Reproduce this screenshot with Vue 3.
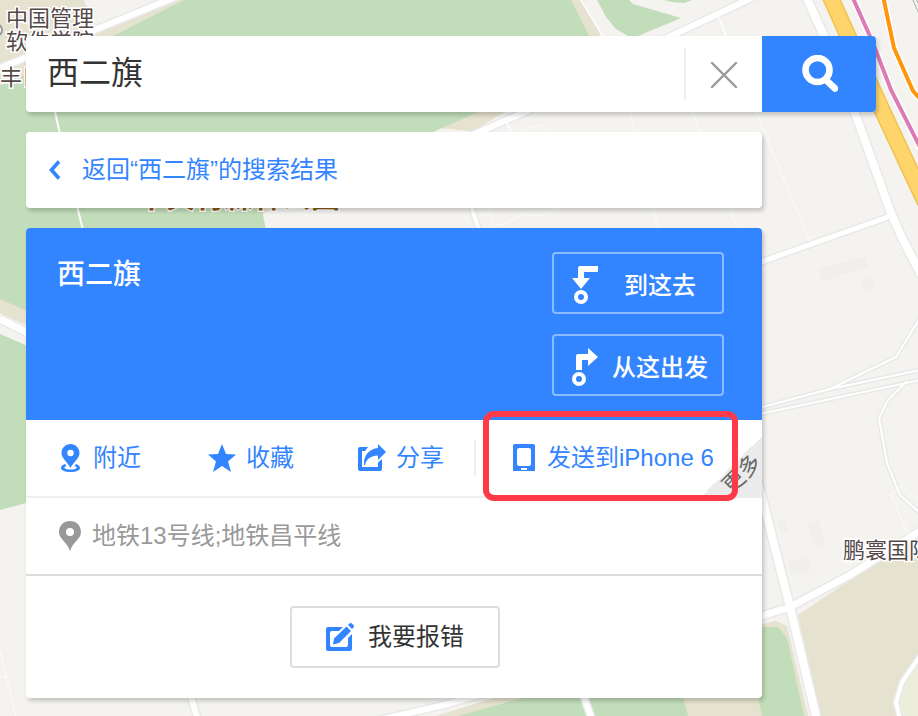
<template>
  <main class="page">
    <!-- Mapa de fondo -->
    <svg class="map" viewBox="0 0 918 716" preserveAspectRatio="xMinYMin slice" aria-hidden="true">
      <rect width="918" height="716" fill="#f4f3ef" />

      <!-- Zonas verdes y terrenos -->
      <g fill="#e5e2cf">
        <path d="M0 0H84L95 32L0 75Z" />
        <path d="M95 30L165 0H190L113 40L0 90V64Z" />
        <path d="M566 0H583L603 40H585Z" />
        <path d="M455 110H508L468 134L255 240V205Z" />
        <path d="M0 296L30 310V327L0 313Z" />
        <path d="M798 615L880 560L918 538V716H820Z" />
        <path d="M755 626L776 621L787 626L808 716H680V690H760Z" />
        <path d="M500 696H540L480 716H436Z" />
      </g>
      <path d="M262 214L440 128L478 132V240H268Z" fill="#f4f3ef" />
      <g fill="#c2ddb9">
        <path d="M184 0H571L589 36L560 90L478 112L433 132L262 210L268 240L120 330L30 312L0 299V86L113 36Z" />
        <path d="M0 334L30 347V502L0 510Z" />
        <path d="M597 0H629L633 4L681 18L638 36H628L616 29L606 17Z" />
        <path d="M664 0H692L685 3L672 2Z" />
        <path d="M762 627H778L787 638L804 716H762L755 680Z" />
        <path d="M526 697H683L688 716H458Z" />
      </g>
      <path d="M918 656L902 680L896 702L900 716H918Z" fill="#ededdc" />
      <g fill="#f0efec">
        <path d="M818 268L866 256L868 266L822 282Z" />
        <path d="M860 282L872 277L875 287L864 291Z" />
        <path d="M778 520L785 518L788 530L780 533Z" />
        <path d="M806 524L818 519L826 545L815 545Z" />
        <path d="M788 562L808 555L811 570L792 576Z" />
      </g>

      <!-- Calles: borde gris y relleno blanco -->
      <g v-for="calle in calles" :key="calle.d" fill="none" stroke-linejoin="round">
        <path :d="calle.d" stroke="#e9e9e9" :stroke-width="calle.w + 3" />
      </g>
      <g v-for="calle in calles" :key="calle.d" fill="none" stroke-linejoin="round">
        <path :d="calle.d" stroke="#fff" :stroke-width="calle.w" />
      </g>
      <g fill="none" stroke="#fcfcfc" stroke-width="2">
        <path d="M55 112L60 134M77 206L83 230M718 16L727 38M505 118L511 132" />
        <path d="M756 112L784 180L811 243M630 112L636 134M692 112L701 134M653 206L658 230M729 206L738 230" stroke-width="1" />
        <path d="M522 133L530 128L541 125L550 129L551 133M478 218L489 212L495 225L503 225L524 214L539 216L560 208" stroke-width="1" />
        <path d="M908 534L891 495L902 485L918 500M0 652L16 716M0 677H6" stroke-width="1" />
        <path d="M581 0L604 38" />
      </g>

      <!-- Vías rápidas y líneas de metro -->
      <g fill="none">
        <path d="M830 -4L848 36L883 112L925 202" stroke="#f0c24f" stroke-width="17" />
        <path d="M830 -4L848 36L883 112L925 202" stroke="#ffd56b" stroke-width="14" />
        <path d="M852 -4L873 43L891 90L921 149" stroke="#fff" stroke-width="7" />
        <path d="M852 -4L873 43L891 90L921 149" stroke="#dd7bb5" stroke-width="4" />
        <path d="M883 -4L894 48L913 91L922 101" stroke="#fff" stroke-width="7" />
        <path d="M883 -4L894 48L913 91L922 101" stroke="#ff950a" stroke-width="4" />
        <path d="M912 -2L920 16M916 -2L921 10" stroke="#aaa" stroke-width="1" />
      </g>

      <circle cx="-4" cy="30" r="6" fill="#fff" stroke="#999" stroke-width="2" />
      <g class="map-label">
        <text x="6" y="26">中国管理</text>
        <text x="6" y="49">软件学院</text>
        <text x="0" y="85">丰巨</text>
        <text x="843" y="558">鹏寰国际</text>
      </g>
      <text class="map-park" x="137" y="208">中关村森林公园</text>
    </svg>

    <div class="panel">
      <form class="search" @submit.prevent="buscar">
        <input v-model="consulta" class="search-input" type="text" aria-label="搜索" />
        <button class="clear" type="button" aria-label="清空" @click="consulta = ''">
          <svg width="28" height="28" viewBox="0 0 28 28">
            <path d="M2 3L26 27M26 3L2 27" fill="none" stroke="#999" stroke-width="2.4" stroke-linecap="round" />
          </svg>
        </button>
        <button class="submit" type="submit" aria-label="搜索">
          <svg width="38" height="38" viewBox="0 0 38 38" fill="none" stroke="#fff">
            <circle cx="17.500" cy="15" r="12" stroke-width="6.600" />
            <path d="M26 25L35 33.500" stroke-width="6.600" stroke-linecap="round" />
          </svg>
        </button>
      </form>

      <a class="card back" href="#">
        <svg width="12" height="20" viewBox="0 0 12 20">
          <path d="M10 1.500L2.500 10L10 18.500" fill="none" stroke="#3385ff" stroke-width="3.600" />
        </svg>
        <span>返回“{{ lugar }}”的搜索结果</span>
      </a>

      <section class="card">
        <header class="place">
          <h1>{{ lugar }}</h1>
          <div class="routes">
            <button type="button" class="route">
              <svg width="26" height="38" viewBox="0 0 26 38">
                <path d="M6 12V2Q6 0 8 0H26V6H12V12H18L9 23L0 12Z" fill="#fff" />
                <circle cx="9" cy="31" r="5" fill="none" stroke="#fff" stroke-width="4" />
              </svg>
              <span>到这去</span>
            </button>
            <button type="button" class="route">
              <svg width="26" height="38" viewBox="0 0 26 38">
                <path d="M4 22V8Q4 6 6 6H16V0L26 9L16 18V12H10V22Z" fill="#fff" />
                <circle cx="7" cy="31" r="5" fill="none" stroke="#fff" stroke-width="4" />
              </svg>
              <span>从这出发</span>
            </button>
          </div>
        </header>

        <nav class="actions">
          <a class="action" href="#">
            <svg width="22" height="28" viewBox="0 0 22 28" fill="#3385ff">
              <path fill-rule="evenodd" d="M9.500 0C4.500 0 .5 4 .5 9C.5 14.500 6.500 18 9.500 24C12.500 18 18.500 14.500 18.500 9C18.500 4 14.500 0 9.500 0ZM9.500 5.800A3.200 3.200 0 1 1 9.500 12.200A3.200 3.200 0 1 1 9.500 5.800Z" />
              <path d="M4 20C1.500 20.700 0 22 0 24C0 26.500 4.500 28 9.500 28C14.500 28 19 26.500 19 24C19 22 17.500 20.700 15 20L13.500 22C15.500 22.500 16 23.200 15.500 24C14.500 25 12 25.500 9.500 25.500C7 25.500 4.500 25 3.500 24C3 23.200 3.500 22.500 5.500 22Z" />
            </svg>
            <span>附近</span>
          </a>
          <a class="action" href="#">
            <svg width="28" height="28" viewBox="0 0 28 28">
              <path d="M14 0L18 10L28 10.500L20 17.500L23 28L14 22L5 28L8 17.500L0 10.500L10 10Z" fill="#3385ff" />
            </svg>
            <span>收藏</span>
          </a>
          <a class="action" href="#">
            <svg width="28" height="28" viewBox="0 0 28 28" fill="#3385ff">
              <path d="M10 3H2Q0 3 0 5V25Q0 27 2 27H22Q24 27 24 25V15L20 18.500V23H4V7H7Z" />
              <path d="M20 0L28 8L20 16V11.500C13 11.500 8.500 15 7 21H6C5.500 11 11 5 20 4Z" />
            </svg>
            <span>分享</span>
          </a>
          <div class="send">
            <a class="send-link" href="#">
              <svg width="22" height="28" viewBox="0 0 22 28">
                <path fill-rule="evenodd" d="M2 0H20Q22 0 22 2V27H0V2Q0 0 2 0ZM6 4Q4 4 4 6V20Q4 22 6 22H16Q18 22 18 20V6Q18 4 16 4ZM8 24V26H14V24Z" fill="#3385ff" />
              </svg>
              <span>发送到iPhone 6</span>
            </a>
            <a class="more" href="#"><span>更多</span></a>
            <div class="highlight"></div>
          </div>
        </nav>

        <p class="address">
          <svg width="22" height="30" viewBox="0 0 22 30">
            <path fill-rule="evenodd" d="M11 0C4.500 0 0 4.800 0 11C0 18 7.500 20 11 30C14.500 20 22 18 22 11C22 4.800 17.500 0 11 0ZM11 7A4 4 0 1 1 11 15A4 4 0 1 1 11 7Z" fill="#999" />
          </svg>
          <span>地铁13号线;地铁昌平线</span>
        </p>

        <footer class="report">
          <button type="button" class="report-button">
            <svg width="28" height="28" viewBox="0 0 28 28" fill="#3385ff">
              <path d="M17 4H2Q0 4 0 6V26Q0 28 2 28H24Q26 28 26 26V11L22 15V22Q22 24 20 24H6Q4 24 4 22V10Q4 8 6 8H13Z" />
              <path d="M20.500 3.500L25 8L13 20L7 21.500L8 15.500ZM22 2L23.500 .5Q25 -.5 26.500 1L27.500 2Q28.500 3.500 27.500 4.500L26 6Z" />
            </svg>
            <span>我要报错</span>
          </button>
        </footer>
      </section>
    </div>
  </main>
</template>

<script setup>
import { ref } from 'vue'

// Datos reactivos
const consulta = ref('西二旗')
const lugar = ref('西二旗')

// Calles del mapa: trazado y ancho
const calles = [
  { d: 'M178 -4L92 31L0 68', w: 6 },
  { d: 'M758 -5L671 36L525 112L470 136', w: 6 },
  { d: 'M806 -4L824 36L855 113L891 213L903 240L922 276', w: 8 },
  { d: 'M891 216L755 264', w: 5 },
  { d: 'M0 319L30 334', w: 7 },
  { d: 'M471 206L479 230', w: 4 },
  { d: 'M755 409L830 389L920 370', w: 2 },
  { d: 'M755 415L920 380', w: 2 },
  { d: 'M830 389L896 357L920 318', w: 2 },
  { d: 'M907 381L888 400L879 418L887 463L900 495L920 513', w: 2 },
  { d: 'M755 618L790 607L850 575L920 531', w: 7 },
  { d: 'M757 480L762 497L790 607L817 720', w: 8 },
  { d: 'M920 656L902 682L896 702L900 720', w: 4 },
  { d: 'M190 694L198 720', w: 6 },
  { d: 'M370 722L440 706L490 692', w: 6 },
  { d: 'M583 694L592 720', w: 6 }
]

// Buscar un lugar
const buscar = () => {
  if (consulta.value) lugar.value = consulta.value
}
</script>

<style>
body {
  margin: 0;
}
</style>

<style scoped>
.page {
  position: relative;
  box-sizing: border-box;
  min-height: 100vh;
  padding: 36px 42px 18px 26px;
  overflow: hidden;
  background: #f4f3ef;
  font-family: 'Liberation Sans', 'Noto Sans CJK SC', sans-serif;
  font-size: 24px;
  line-height: 36px;
}

.map {
  position: absolute;
  top: 0;
  left: 0;
  width: 100%;
  height: 100%;
}

.map-label,
.map-park {
  font-size: 22px;
  fill: #544848;
  stroke: #fff;
  stroke-width: 3px;
  paint-order: stroke;
}

.map-park {
  font-size: 29px;
  font-weight: bold;
  fill: #8a5a14;
}

.panel {
  position: relative;
}

svg {
  flex: none;
  display: block;
}

a {
  color: #3385ff;
  text-decoration: none;
}

button,
input {
  box-sizing: border-box;
  margin: 0;
  padding: 0;
  border: none;
  border-radius: 0;
  outline: none;
  font: inherit;
}

button {
  cursor: pointer;
}

/* Buscador */
.search {
  display: flex;
  align-items: center;
  height: 76px;
  margin-bottom: 20px;
  border-radius: 4px;
  background: #fff;
  box-shadow: 2px 3px 4px rgba(0, 0, 0, 0.2);
}

.search-input {
  flex: 1;
  min-width: 0;
  height: 76px;
  padding: 0 21px 8px;
  background: transparent;
  color: #333;
  font-size: 32px;
}

.clear {
  display: flex;
  align-items: center;
  justify-content: center;
  width: 78px;
  height: 52px;
  border-left: 2px solid #eee;
  background: transparent;
}

.submit {
  display: flex;
  align-items: center;
  justify-content: center;
  width: 114px;
  height: 76px;
  border-radius: 0 4px 4px 0;
  background: #3385ff;
}

/* Tarjetas */
.card {
  margin-right: 114px;
  border-radius: 4px;
  background: #fff;
  box-shadow: 2px 3px 4px rgba(0, 0, 0, 0.2);
}

.back {
  display: flex;
  align-items: center;
  gap: 21px;
  height: 76px;
  margin-bottom: 20px;
  padding-left: 23px;
  box-sizing: border-box;
}

.place {
  display: flex;
  align-items: flex-start;
  justify-content: space-between;
  padding: 24px 38px 24px 31px;
  border-radius: 4px 4px 0 0;
  background: #3385ff;
  color: #fff;
}

h1 {
  margin: 0;
  font-size: 28px;
  font-weight: 500;
  line-height: 46px;
}

.routes {
  display: flex;
  flex-direction: column;
  gap: 20px;
}

.route {
  display: flex;
  align-items: center;
  width: 172px;
  height: 62px;
  padding: 4px 0 0 18px;
  border: 2px solid #8abaff;
  border-radius: 4px;
  background: transparent;
  color: #fff;
  font-weight: 500;
}

.route span {
  flex: 1;
  padding-top: 2px;
  text-align: center;
}

.actions {
  display: flex;
  height: 76px;
  border-bottom: 2px solid #eee;
}

.action {
  display: flex;
  flex: 0 0 150px;
  align-items: center;
  justify-content: center;
  gap: 10px;
}

.send {
  position: relative;
  display: flex;
  flex: 1;
  align-items: center;
}

.send-link {
  display: flex;
  align-items: center;
  gap: 12px;
  height: 36px;
  margin-left: -2px;
  padding-left: 37px;
  border-left: 2px solid #eee;
}

/* Esquina plegada */
.more {
  position: absolute;
  right: 0;
  bottom: -2px;
  width: 62px;
  height: 62px;
  background: linear-gradient(135deg, transparent 50%, #ebebeb 50%);
  color: #666;
  font-size: 22px;
}

.more span {
  position: absolute;
  top: 20px;
  left: 20px;
  transform: rotate(-45deg);
  line-height: 36px;
  white-space: nowrap;
}

.highlight {
  position: absolute;
  top: -9px;
  right: 24px;
  bottom: -5px;
  left: 7px;
  border: 6px solid #ff3a48;
  border-radius: 11px;
  pointer-events: none;
}

.address {
  display: flex;
  align-items: center;
  gap: 11px;
  height: 76px;
  margin: 0;
  padding-left: 33px;
  border-bottom: 2px solid #ddd;
  color: #999;
}

.report {
  display: flex;
  justify-content: center;
  padding: 30px 0 30px 2px;
}

.report-button {
  display: flex;
  align-items: center;
  justify-content: center;
  gap: 14px;
  width: 210px;
  height: 62px;
  border: 2px solid #ddd;
  border-radius: 4px;
  background: #fff;
  color: #333;
}
</style>
